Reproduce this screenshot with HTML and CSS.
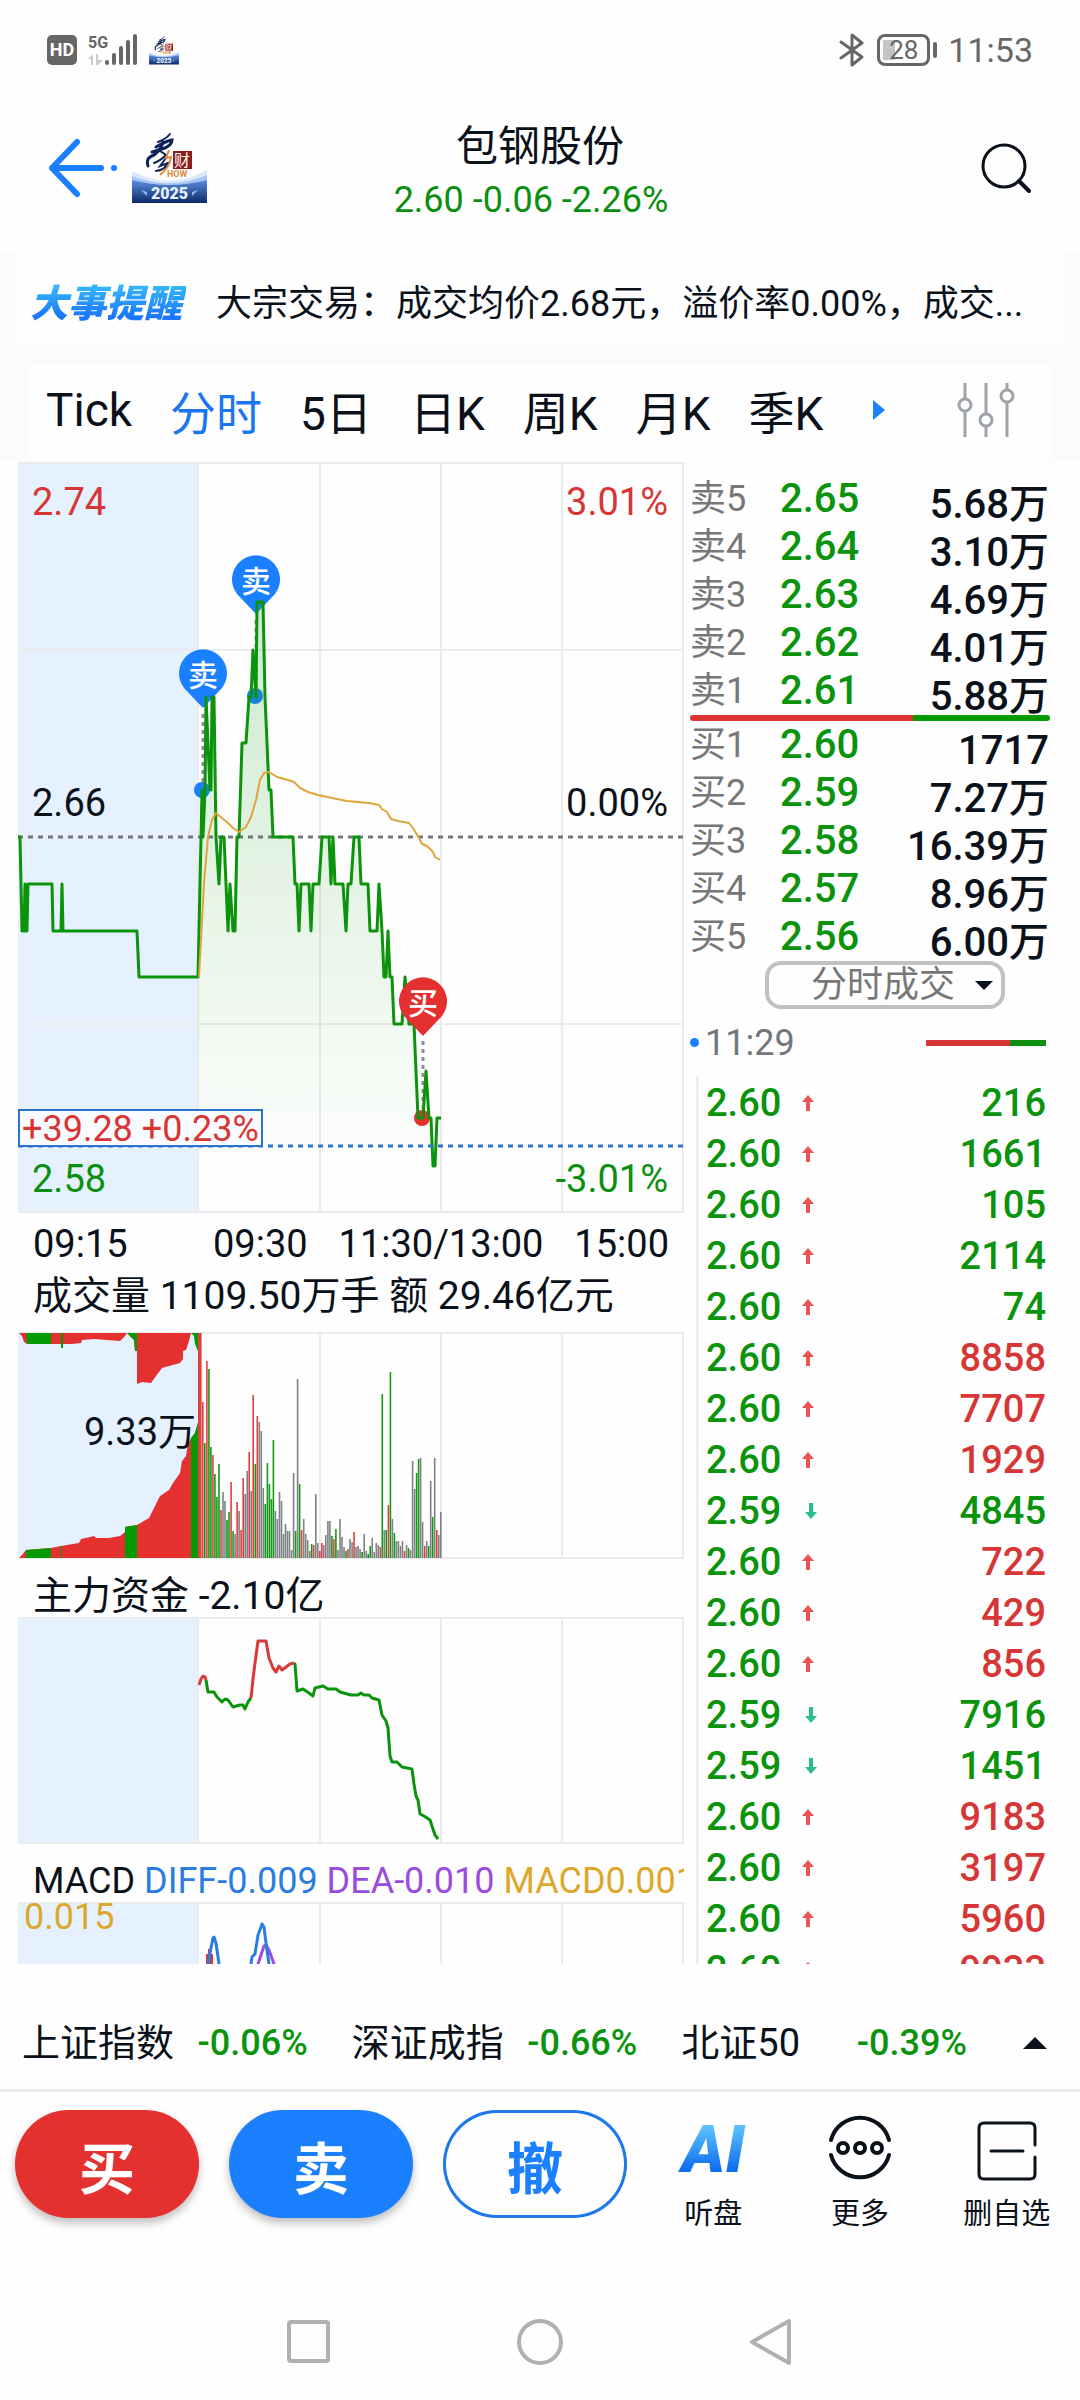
FILE: index.html
```html
<!DOCTYPE html>
<html lang="zh-CN">
<head>
  <meta charset="UTF-8" />
  <meta name="viewport" content="width=device-width, initial-scale=1" />
  <title>包钢股份 – 分时</title>
  <link rel="stylesheet" href="styles.css">
</head>
<body>
  <svg class="defs" width="0" height="0" aria-hidden="true">
    <symbol id="logo" viewBox="0 0 75 70">
      <linearGradient id="banner" x1="0" y1="0" x2="0" y2="1">
        <stop offset="0" stop-color="#5b8de0"/><stop offset="1" stop-color="#0d2a66"/>
      </linearGradient>
      <path fill="#dbe8fb" d="M0 38 Q37 58 75 37 V60 H0z"/>
      <path fill="#a9c6f2" d="M0 43 Q37 58 75 42 V60 H0z"/>
      <path fill="url(#banner)" d="M0 47 Q37 57 75 47 V70 H0z"/>
      <g fill="none" stroke="#0c2456" stroke-linecap="round">
        <path stroke-width="2" d="M38 1 Q34 6 26 9"/>
        <path stroke-width="3" d="M24 14 Q34 8 40 7 Q40 13 30 16 L20 19"/>
        <path stroke-width="3" d="M31 9 Q28 20 18 24 Q14 27 16 33"/>
        <path stroke-width="2" d="M28 18 L34 22 Q28 28 22 30"/>
        <path stroke-width="2" d="M34 25 L28 33 L36 30 Q33 37 24 38"/>
      </g>
      <path fill="none" stroke="#e08a3a" stroke-width="2" d="M37 17 L34 25 L39 24 Q38 34 28 42"/>
      <rect x="41" y="18" width="19" height="18" fill="#8e1c1c"/>
      <text x="42" y="33" font-size="16" fill="#fff">财</text>
      <text x="35" y="44" font-size="9" font-weight="700" fill="#d98a3d">HOW</text>
      <text x="19" y="66" font-size="16" font-weight="900" fill="#e2f1ff">2025</text>
      <path fill="#8fb5ee" d="M9 57 l6 2 v4z M66 57 l-6 2 v4z"/>
    </symbol>
    <symbol id="up" viewBox="0 0 12 16"><path fill="#ec5454" d="M6 0 L12 7 H8 V16 H4 V7 H0z"/></symbol>
    <symbol id="down" viewBox="0 0 12 16"><path fill="#2bbf8e" d="M6 16 L12 9 H8 V0 H4 V9 H0z"/></symbol>
  </svg>

  <div class="status">
    <span class="hd">HD</span>
    <svg class="signal" viewBox="0 0 50 34" aria-hidden="true">
      <text x="0" y="15" font-size="16" font-weight="700" fill="#666">5G</text>
      <path fill="#ccc" d="M0 26 L5 21 V32 H3 V26z M8 21 H10 V27 H15 L10 32 H8z"/>
      <g stroke="#666" stroke-width="4" stroke-linecap="round">
        <path d="M19 29 V30 M26 22 V30 M33 15 V30 M40 9 V30 M47 3 V30"/>
      </g>
    </svg>
    <svg class="logo-small"><use href="#logo"/></svg>
    <span class="spacer"></span>
    <svg class="bluetooth" viewBox="0 0 26 34" aria-hidden="true">
      <path fill="none" stroke="#666" stroke-width="3" stroke-linejoin="round" stroke-linecap="round" d="M2 9 L23 24 L13 32 V2 L23 10 L2 25"/>
    </svg>
    <span class="battery">28</span>
    <span class="clock">11:53</span>
  </div>

  <header>
    <a class="back" href="#" aria-label="返回">
      <svg width="70" height="60" viewBox="0 0 70 60"><path fill="none" stroke="#1a80ff" stroke-width="6" stroke-linecap="round" stroke-linejoin="round" d="M29 4 L4 30 L29 56 M4 30 H53"/><circle cx="66" cy="30" r="3" fill="#1a80ff"/></svg>
    </a>
    <svg class="logo"><use href="#logo"/></svg>
    <div class="title">
      <h1>包钢股份</h1>
      <p>2.60 -0.06 -2.26%</p>
    </div>
    <button class="search" aria-label="搜索">
      <svg width="52" height="52" viewBox="0 0 52 52"><g fill="none" stroke="#0b111a" stroke-width="3"><circle cx="24" cy="24" r="21"/><path stroke-width="4" stroke-linecap="round" d="M39 39 L49 49"/></g></svg>
    </button>
  </header>

  <div class="top">
    <a class="notice" href="#">
      <span class="notice-tag">大事提醒</span>
      <span class="notice-text">大宗交易：成交均价2.68元，溢价率0.00%，成交...</span>
    </a>
    <nav class="tabs">
      <button>Tick</button>
      <button class="active">分时</button>
      <button>5日</button>
      <button>日K</button>
      <button>周K</button>
      <button>月K</button>
      <button>季K</button>
      <svg class="next" viewBox="0 0 12 20" aria-hidden="true"><path fill="#1a80ff" d="M0 0 L12 10 L0 20z"/></svg>
      <button class="settings" aria-label="设置">
        <svg width="58" height="56" viewBox="0 0 58 56"><g fill="none" stroke="#9da3aa" stroke-width="3"><path d="M8 1 V17 M8 30 V55 M29 1 V32 M29 45 V55 M50 1 V8 M50 21 V55"/><circle cx="8" cy="23" r="6"/><circle cx="29" cy="38" r="6"/><circle cx="50" cy="14" r="6"/></g></svg>
      </button>
    </nav>
  </div>

  <main>
    <section class="charts">
      <svg class="chart" viewBox="0 0 666 751">
        <defs>
          <linearGradient id="area" gradientUnits="userSpaceOnUse" x1="0" y1="140" x2="0" y2="720">
            <stop offset="0" stop-color="#0c9a10" stop-opacity="0.2"/><stop offset="1" stop-color="#0c9a10" stop-opacity="0"/>
          </linearGradient>
        </defs>
        <rect class="pre" width="180" height="751"/>
        <path class="grid" d="M0 1 H666 M0 188 H666 M0 562 H666 M0 750 H666 M180 0 V751 M302 0 V751 M423 0 V751 M544 0 V751 M665 0 V751"/>
        <path class="dash zero" d="M0 375 H666"/>
        <g fill="#1a80ff">
          <path d="M185 246 L166 226 A24 24 0 1 1 204 226z"/>
          <path d="M238 152 L219 132 A24 24 0 1 1 257 132z"/>
          <circle cx="184" cy="328" r="8"/>
          <circle cx="237" cy="234" r="8"/>
        </g>
        <circle cx="404" cy="656" r="8" fill="#e53030"/>
        <path class="stem" d="M185 252 V322 M238 158 V228 M405 579 V650"/>
        <path id="priceArea" fill="url(#area)"/>
        <path id="priceLine" class="line green"/>
        <path class="line average" d="M181 515 L186 421 L190 375 L194 358 L198 351 L204 356 L210 361 L215 366 L221 370 L228 365 L233 355 L238 338 L242 318 L246 311 L251 310 L259 315 L270 318 L276 320 L282 326 L290 330 L300 333 L314 336 L329 339 L351 341 L361 343 L364 347 L369 350 L373 357 L380 359 L391 361 L395 366 L401 376 L404 382 L409 384 L415 390 L417 395 L422 398"/>
        <path fill="#e53030" d="M405 574 L386 554 A24 24 0 1 1 424 554z"/>
        <g class="pin-text">
          <text x="185" y="224">卖</text>
          <text x="238" y="130">卖</text>
          <text x="405" y="552">买</text>
        </g>
        <path class="dash index" d="M0 684 H666"/>
        <rect class="index-box" x="1" y="648" width="243" height="36"/>
        <text class="red small" x="4" y="679">+39.28 +0.23%</text>
        <text class="red" x="14" y="53">2.74</text>
        <text class="red end" x="650" y="53">3.01%</text>
        <text x="14" y="354">2.66</text>
        <text class="end" x="650" y="354">0.00%</text>
        <text class="green-text" x="14" y="730">2.58</text>
        <text class="green-text end" x="650" y="730">-3.01%</text>
      </svg>
      <div class="axis">
        <span>09:15</span>
        <div><span>09:30</span><span>11:30/13:00</span><span>15:00</span></div>
      </div>
      <h2 class="tall">成交量 1109.50万手 额 29.46亿元</h2>
      <svg class="chart" viewBox="0 0 666 227">
        <rect class="pre" width="180" height="227"/>
        <path class="grid" d="M0 1 H666 M0 226 H666 M302 0 V227 M423 0 V227 M544 0 V227 M665 0 V227"/>
        <path fill="#e53030" d="M1 226 L4 223 L8 218 L33 216 L43 214 L61 211 L63 207 L72 205 L76 204 L78 206 L91 206 L102 204 L107 200 V195 L119 193 L131 186 L136 176 L142 164 L151 158 L155 151 L162 141 L164 129 L168 124 L170 112 L173 106 L177 101 L180 91 V226z"/>
        <path fill="#e53030" d="M1 1 L4 4 L6 10 L9 12 H54 L63 11 L64 8 L76 7 L102 9 L107 4 L109 1 L114 6 L116 8 L117 19 H119 V52 L124 50 L133 51 L138 44 L144 36 L151 34 L162 31 L165 27 V19 L168 18 L171 9 L173 1z"/>
        <path fill="#049a04" d="M8 226 V218 L33 216 V226z M107 226 V195 L119 193 V226z M173 226 V106 L177 101 L180 91 V226z M8 1 L9 12 H33 V1z M109 1 L114 6 L116 8 L117 19 H119 V1z M173 1 L176 4 L177 12 L180 19 V1z M43 1 H45 V16 H43z M43 214 H44 V226 H43z"/>
        <g id="volume"></g>
        <text class="end" x="178" y="113">9.33万</text>
      </svg>
      <h2>主力资金 -2.10亿</h2>
      <svg class="chart" viewBox="0 0 666 227">
        <rect class="pre" width="180" height="227"/>
        <path class="grid" d="M0 1 H666 M0 226 H666 M180 0 V227 M302 0 V227 M423 0 V227 M544 0 V227 M665 0 V227"/>
        <path class="line green" d="M188 63 L190 75 L196 75 L199 80 L204 85 L207 82 L210 83 L215 90 L222 88 L225 88 L227 92 L230 85 L233 81"/>
        <path class="line green" d="M276 46 L277 47 L279 74 L285 72 L291 76 L295 79 L297 71 L305 69 L310 72 L318 72 L322 75 L333 78 L340 78 L343 76 L346 78 L351 78 L354 81 L361 83 L364 98 L368 104 L370 111 L372 139 L374 145 L379 145 L384 150 L394 152 L396 167 L398 179 L400 183 L402 197 L406 199 L412 203 L415 212 L417 218 L420 222"/>
        <path class="line red-line" d="M181 68 L183 62 L185 59 L187 60 L188 63 M233 81 L235 62 L237 46 L240 24 L248 24 L251 41 L255 51 L258 55 L261 49 L264 53 L272 47 L276 46"/>
      </svg>
      <h2 class="macd">MACD <span class="diff">DIFF-0.009</span> <span class="dea">DEA-0.010</span> <span class="bar">MACD0.001</span></h2>
      <svg class="chart" viewBox="0 0 666 227">
        <rect class="pre" width="180" height="227"/>
        <path class="grid" d="M0 1 H666 M0 226 H666 M180 0 V227 M302 0 V227 M423 0 V227 M544 0 V227 M665 0 V227"/>
        <path fill="#d83a3a" d="M188 90 V52 H190 V47 H192 V52 H195 V90z"/>
        <path class="line" stroke="#9b4be0" d="M234 90 L240 62 L244 50 L246 44 L248 43 L251 48 L256 62 L260 90"/>
        <path class="line" stroke="#2a7de0" d="M187 90 L190 62 L193 46 L195 36 L196 35 L198 41 L201 62 L203 90 M230 90 L233 62 L234 55 L237 52 L240 33 L243 25 L244 22 L246 25 L248 41 L251 62 L253 90"/>
        <text class="small gold" x="6" y="27">0.015</text>
      </svg>
    </section>

    <section class="side">
      <table class="quotes">
        <tr><th>卖5</th><td>2.65</td><td>5.68万</td></tr>
        <tr><th>卖4</th><td>2.64</td><td>3.10万</td></tr>
        <tr><th>卖3</th><td>2.63</td><td>4.69万</td></tr>
        <tr><th>卖2</th><td>2.62</td><td>4.01万</td></tr>
        <tr><th>卖1</th><td>2.61</td><td>5.88万</td></tr>
      </table>
      <div class="ratio"></div>
      <table class="quotes">
        <tr><th>买1</th><td>2.60</td><td>1717</td></tr>
        <tr><th>买2</th><td>2.59</td><td>7.27万</td></tr>
        <tr><th>买3</th><td>2.58</td><td>16.39万</td></tr>
        <tr><th>买4</th><td>2.57</td><td>8.96万</td></tr>
        <tr><th>买5</th><td>2.56</td><td>6.00万</td></tr>
      </table>
      <div class="picker">
        <select aria-label="成交明细"><option>分时成交</option></select>
      </div>
      <div class="minute"><span>11:29</span><i></i></div>
      <table class="ticks" id="ticks"></table>
    </section>
  </main>

  <div class="indices">
    <div><span>上证指数</span><b>-0.06%</b></div>
    <div><span>深证成指</span><b>-0.66%</b></div>
    <div><span>北证50</span><b>-0.39%</b></div>
    <svg width="24" height="12" viewBox="0 0 24 12" aria-hidden="true"><path fill="#0b111a" d="M12 0 L24 12 H0z"/></svg>
  </div>

  <footer>
    <button class="pill buy">买</button>
    <button class="pill sell">卖</button>
    <button class="pill cancel">撤</button>
    <div class="tools">
      <button><span class="icon ai">AI</span>听盘</button>
      <button>
        <span class="icon"><svg width="66" height="68" viewBox="0 0 66 68"><g fill="none" stroke="#0b111a" stroke-width="4" stroke-linecap="round"><path d="M4 26 A30 30 0 0 1 62 26 M4 41 A30 30 0 0 0 62 41"/><circle cx="16" cy="34" r="5"/><circle cx="33" cy="34" r="5"/><circle cx="50" cy="34" r="5"/></g></svg></span>更多
      </button>
      <button>
        <span class="icon low"><svg width="60" height="60" viewBox="0 0 60 60"><path fill="none" stroke="#0b111a" stroke-width="3" stroke-linecap="round" d="M58 24 V7 Q58 2 53 2 H7 Q2 2 2 7 V53 Q2 58 7 58 H53 Q58 58 58 53 V36 M14 30 H46"/></svg></span>删自选
      </button>
    </div>
  </footer>

  <nav class="system">
    <button aria-label="最近任务"><svg width="46" height="48" viewBox="0 0 46 48"><rect x="3" y="4" width="39" height="39" rx="2"/></svg></button>
    <button aria-label="主屏幕"><svg width="46" height="48" viewBox="0 0 46 48"><circle cx="23" cy="24" r="21"/></svg></button>
    <button aria-label="返回"><svg width="46" height="48" viewBox="0 0 46 48"><path d="M41 3 V45 L4 24z"/></svg></button>
  </nav>

  <script>
    // price line, x,y pairs
    const price = '0,375 2,375 3,422 4,469 6,469 7,422 8,469 9,469 10,422 34,422 35,469 43,469 44,422 45,469 119,469 121,515 180,515 ' +
      '183,375 184,328 185,375 187,328 188,235 192,328 193,328 194,235 196,235 198,375 201,422 203,375 206,375 208,422 210,469 212,422 215,469 217,469 219,375 221,375 ' +
      '224,281 228,281 231,235 233,235 235,188 238,235 239,140 245,140 247,235 249,281 251,328 253,328 255,375 275,375 277,422 279,422 281,469 283,422 291,422 293,469 295,422 ' +
      '301,422 304,375 311,375 313,422 315,375 317,422 325,422 328,469 330,422 333,422 336,375 341,375 343,422 350,422 352,469 359,469 361,422 364,469 366,515 368,515 370,469 ' +
      '372,515 374,515 376,562 384,562 387,515 391,562 396,562 400,656 405,656 408,609 411,656 413,656 415,704 417,704 419,656 423,656';
    const points = price.split(' ');
    document.getElementById('priceLine').setAttribute('d', 'M' + points.join(' L'));
    const session = points.filter(p => parseInt(p) >= 180);
    document.getElementById('priceArea').setAttribute('d', 'M' + session.join(' L') + ' L423,750 L180,750 Z');

    // one bar a minute: r = up, g = down, x = flat
    const volume = 'r225 r156 g115 r197 g189 g111 r103 g84 g61 g94 r48 x66 x57 g38 g46 r76 g27 x24 r56 x47 r28 r80 x64 x87 r106 x67 r163 g94 r142 x136 ' +
      'x127 x70 g54 g95 g74 g59 g118 x47 x39 x66 x57 x24 x34 x27 x27 x8 x85 g27 x179 g74 r28 x39 x24 x18 x7 g14 r13 x64 x15 r7 r15 x13 x23 x37 x37 ' +
      'g22 r19 g29 x8 x39 x21 x11 g7 r9 x19 x16 r26 x11 x12 x9 g6 x24 x7 g4 g12 x20 x6 x15 x13 r11 g164 x28 g28 r53 g186 x39 g25 x17 x17 x12 x17 ' +
      'r7 x13 g10 x8 x97 x69 g85 g99 x100 x36 r12 x17 g12 x77 g41 x100 r28 x23 x46';
    const colors = { r: '#e04040', g: '#129a12', x: '#7e8286' };
    const bars = volume.split(' ');
    document.getElementById('volume').innerHTML = '<rect x="180" y="1" width="2" height="225" fill="#e04040"/>' + bars.map((bar, i) => {
      const h = Number(bar.slice(1));
      const x = 182 + i * 240 / (bars.length - 1);
      return `<rect x="${x.toFixed(1)}" y="${226 - h}" width="1.6" height="${h}" fill="${colors[bar[0]]}"/>`;
    }).join('');

    const ticks = [
      ['2.60', 'up', 216, 'g'], ['2.60', 'up', 1661, 'g'], ['2.60', 'up', 105, 'g'], ['2.60', 'up', 2114, 'g'],
      ['2.60', 'up', 74, 'g'], ['2.60', 'up', 8858, 'r'], ['2.60', 'up', 7707, 'r'], ['2.60', 'up', 1929, 'r'],
      ['2.59', 'down', 4845, 'g'], ['2.60', 'up', 722, 'r'], ['2.60', 'up', 429, 'r'], ['2.60', 'up', 856, 'r'],
      ['2.59', 'down', 7916, 'g'], ['2.59', 'down', 1451, 'g'], ['2.60', 'up', 9183, 'r'], ['2.60', 'up', 3197, 'r'],
      ['2.60', 'up', 5960, 'r'], ['2.60', 'up', 9933, 'r']
    ];
    document.getElementById('ticks').innerHTML = ticks.map(([p, dir, n, c]) =>
      `<tr><td>${p}</td><td><svg class="${dir}"><use href="#${dir}"/></svg></td><td class="${c}">${n}</td></tr>`).join('');
  </script>
</body>
</html>
```

FILE: styles.css
```css
* {
  box-sizing: border-box;
}

body {
  margin: 0;
  height: 100vh;
  display: flex;
  flex-direction: column;
  background-color: #fefefe;
  color: #0b111a;
  font-family: Roboto, "Noto Sans CJK SC", sans-serif;
  font-size: 38px;
}

button {
  padding: 0;
  border: none;
  background: none;
  color: inherit;
  font: inherit;
  cursor: pointer;
}

svg {
  display: block;
}

a {
  color: inherit;
  text-decoration: none;
}

.defs {
  position: absolute;
}

/* status bar */
.status {
  display: flex;
  align-items: center;
  height: 100px;
  padding: 0 47px;
  color: #666;
}

.hd {
  width: 30px;
  height: 30px;
  border-radius: 5px;
  background-color: #666;
  color: #fff;
  font-size: 18px;
  font-weight: 700;
  line-height: 30px;
  text-align: center;
}

.signal {
  width: 50px;
  height: 34px;
  margin-left: 11px;
}

.logo-small {
  width: 30px;
  height: 29px;
  margin-left: 11px;
}

.spacer {
  flex: 1;
}

.bluetooth {
  width: 26px;
  height: 34px;
}

.battery {
  position: relative;
  width: 53px;
  height: 32px;
  margin: 0 18px 0 12px;
  border: 3px solid #666;
  border-radius: 8px;
  background: linear-gradient(#c4c4c4, #c4c4c4) 3px 3px / 12px 20px no-repeat;
  font-size: 26px;
  line-height: 26px;
  text-align: center;
}

.battery::after {
  content: "";
  position: absolute;
  top: 5px;
  right: -10px;
  width: 4px;
  height: 16px;
  border-radius: 2px;
  background-color: #666;
}

.clock {
  font-size: 34px;
}

/* header */
header {
  position: relative;
  display: flex;
  align-items: center;
  height: 152px;
  padding: 0 48px 16px;
}

.logo {
  width: 75px;
  height: 70px;
  margin-left: 14px;
}

.title {
  position: absolute;
  left: 0;
  right: 0;
  top: 18px;
  text-align: center;
  pointer-events: none;
}

.title h1 {
  margin: 0;
  font-size: 42px;
  font-weight: 400;
  line-height: 58px;
}

.title p {
  margin: 0;
  padding-right: 18px;
  color: #0c8f10;
  font-size: 36px;
  line-height: 48px;
}

.search {
  margin-left: auto;
}

/* notice and tabs */
.top {
  padding-top: 3px;
  background-color: #fbfbfb;
}

.notice {
  display: flex;
  align-items: center;
  height: 90px;
  margin: 0 15px 21px;
  padding: 0 30px 0 15px;
  background-color: #fefefe;
  white-space: nowrap;
}

.notice-tag {
  margin-right: 30px;
  padding-right: 4px;
  background: linear-gradient(#34b6fb 25%, #1a76fb 80%);
  -webkit-background-clip: text;
  background-clip: text;
  color: transparent;
  font-size: 38px;
  font-style: italic;
  font-weight: 900;
}

.notice-text {
  overflow: hidden;
  font-size: 36px;
  text-overflow: ellipsis;
}

.tabs {
  display: flex;
  align-items: center;
  gap: 38px;
  height: 96px;
  margin: 0 30px;
  padding: 0 35px 9px 16px;
  background-color: #fefefe;
  font-size: 46px;
}

.tabs .active {
  color: #1a76f0;
}

.next {
  width: 12px;
  height: 20px;
  margin-left: 12px;
}

.settings {
  margin-left: auto;
}

/* charts and order book */
main {
  flex: 1;
  display: grid;
  grid-template-columns: minmax(0, 666fr) minmax(0, 360fr);
  gap: 6px;
  min-height: 0;
  padding: 0 30px 0 18px;
  overflow: hidden;
}

.chart {
  width: 100%;
  height: auto;
}

.chart text {
  fill: #0b111a;
  font-size: 38px;
}

.chart .small {
  font-size: 36px;
}

.chart .end {
  text-anchor: end;
}

.chart .red {
  fill: #d83535;
}

.chart .green-text {
  fill: #0c8f10;
}

.chart .gold {
  fill: #dca82c;
}

.chart .pin-text text {
  fill: #fff;
  font-size: 30px;
  font-weight: 500;
  text-anchor: middle;
}

.pre {
  fill: #e5f1fe;
}

.grid {
  fill: none;
  stroke: #e9ebec;
  stroke-width: 2;
}

.dash {
  fill: none;
  stroke-width: 3;
  stroke-dasharray: 5 5;
}

.zero {
  stroke: #74787d;
}

.index {
  stroke: #2a74cc;
}

.index-box {
  fill: #fafbff;
  stroke: #2a74cc;
  stroke-width: 2;
}

.stem {
  fill: none;
  stroke: #888e95;
  stroke-width: 3;
  stroke-dasharray: 4 4;
}

.line {
  fill: none;
  stroke-width: 3;
  stroke-linejoin: round;
}

.green {
  stroke: #0c930c;
}

.red-line {
  stroke: #d83a3a;
}

.average {
  stroke: #e0a43c;
  stroke-width: 2;
}

.axis {
  display: grid;
  grid-template-columns: 180fr 486fr;
  height: 54px;
  line-height: 62px;
}

.axis > span {
  padding-left: 15px;
}

.axis div {
  display: flex;
  justify-content: space-between;
  padding: 0 15px;
}

h2 {
  height: 58px;
  margin: 0;
  padding-left: 15px;
  overflow: hidden;
  font-size: 39px;
  font-weight: 400;
  line-height: 74px;
  white-space: nowrap;
}

.tall {
  height: 65px;
  line-height: 59px;
}

.macd {
  font-size: 36px;
}

.diff {
  color: #2a7de0;
}

.dea {
  color: #9b4be0;
}

.bar {
  color: #dca82c;
}

.side {
  padding-top: 13px;
}

table {
  width: 100%;
  border-collapse: collapse;
  table-layout: fixed;
}

.quotes tr {
  height: 48px;
}

.quotes th,
.quotes td {
  padding: 0;
  font-size: 40px;
  font-weight: 500;
  line-height: 36px;
  text-align: left;
  white-space: nowrap;
}

.quotes th {
  width: 90px;
  color: #777;
  font-size: 36px;
  font-weight: 400;
}

.quotes td:nth-child(2) {
  width: 90px;
  color: #0a930c;
}

.quotes td:last-child {
  padding: 11px 1px 0 0;
  text-align: right;
}

.ratio {
  height: 6px;
  border-radius: 3px;
  background: linear-gradient(to right, #e03434 62%, #049a04 62%);
}

.picker {
  position: relative;
  width: 240px;
  margin: 0 45px 0 auto;
}

.picker select {
  display: block;
  width: 100%;
  height: 48px;
  padding: 0 0 0 42px;
  border: 4px solid #c1c1c1;
  border-radius: 16px;
  appearance: none;
  background-color: #fefefe;
  color: #777;
  font: inherit;
  font-size: 36px;
  line-height: 40px;
}

.picker::after {
  content: "";
  position: absolute;
  top: 20px;
  right: 12px;
  border: 9px solid transparent;
  border-top-color: #0b111a;
  border-bottom: none;
}

.minute {
  display: flex;
  align-items: center;
  height: 67px;
  color: #72767b;
  font-size: 36px;
}

.minute::before {
  content: "";
  width: 9px;
  height: 9px;
  margin-right: 6px;
  border-radius: 50%;
  background-color: #1a80ff;
}

.minute i {
  width: 120px;
  height: 6px;
  margin: 0 4px 0 auto;
  background: linear-gradient(to right, #d83535 70%, #0c8f10 70%);
}

.ticks {
  width: calc(100% - 6px);
  margin-left: 6px;
  border-left: 3px solid #eee;
}

.ticks tr {
  height: 51px;
}

.ticks td {
  padding: 2px 0 0;
  color: #0a930c;
  font-weight: 500;
  line-height: 40px;
}

.ticks td:first-child {
  width: 104px;
  padding-left: 7px;
}

.ticks td:last-child {
  padding-right: 4px;
  text-align: right;
}

.ticks .r {
  color: #d63636;
}

.ticks svg {
  width: 12px;
  height: 16px;
}

.ticks .down {
  margin-left: 3px;
}

/* market indices */
.indices {
  display: grid;
  grid-template-columns: 1fr 1fr 1fr 69px;
  align-items: center;
  column-gap: 44px;
  height: 128px;
  padding: 33px 0 0 22px;
  border-bottom: 3px solid #ebecec;
}

.indices div {
  display: flex;
  align-items: center;
  justify-content: space-between;
  line-height: 56px;
  white-space: nowrap;
}

.indices b {
  color: #0a930c;
  font-size: 36px;
  font-weight: 500;
}

.indices svg {
  margin-left: 12px;
}

/* actions */
footer {
  display: flex;
  align-items: flex-start;
  gap: 30px;
  height: 168px;
  padding: 18px 0 0 15px;
}

.pill {
  flex: 184 1 0;
  height: 108px;
  border-radius: 54px;
  color: #fff;
  font-size: 56px;
  font-weight: 700;
}

.buy {
  background-color: #e53030;
  box-shadow: 0 5px 8px rgba(0, 0, 0, 0.25);
}

.sell {
  background-color: #1a80ff;
  box-shadow: 0 5px 8px rgba(0, 0, 0, 0.25);
}

.cancel {
  border: none;
  box-shadow: inset 0 0 0 3px #1f78ea;
  color: #1a80ff;
}

.tools {
  display: grid;
  grid-template-columns: repeat(3, 1fr);
  flex: 440 1 0;
  margin-left: -17px;
}

.tools button {
  font-size: 29px;
  line-height: 36px;
}

.icon {
  display: flex;
  align-items: center;
  justify-content: center;
  height: 76px;
  margin-bottom: 10px;
}

.low {
  padding-top: 6px;
}

.ai {
  padding-top: 4px;
  background: linear-gradient(#62c4fb 20%, #0a6cf0 80%);
  -webkit-background-clip: text;
  background-clip: text;
  color: transparent;
  font-size: 66px;
  font-style: italic;
  font-weight: 900;
}

/* system navigation */
.system {
  display: flex;
  align-items: center;
  justify-content: center;
  gap: 185px;
  height: 140px;
  padding-top: 24px;
}

.system svg {
  fill: none;
  stroke: #b0b0b0;
  stroke-width: 4;
  stroke-linejoin: round;
}
```
